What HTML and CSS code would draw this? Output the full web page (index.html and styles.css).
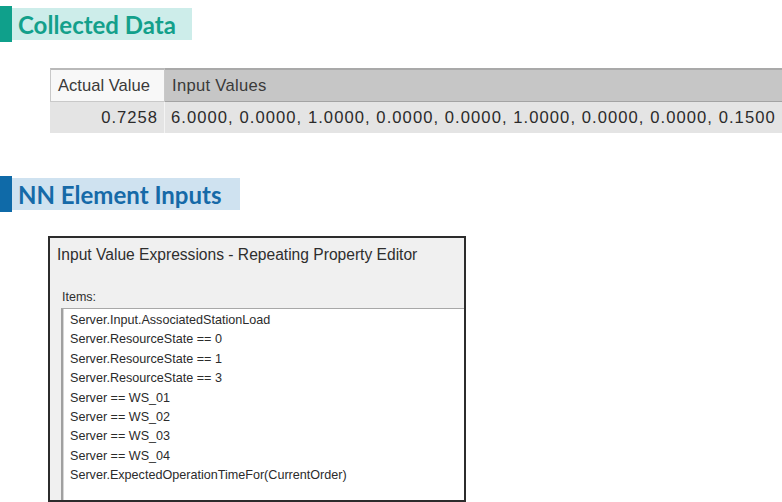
FILE: index.html
```html
<!DOCTYPE html>
<html>
<head>
<meta charset="utf-8">
<link rel="stylesheet" href="styles.css">
</head>
<body>
<div class="heading heading-teal">
  <div class="heading-bar"></div>
  <div class="heading-label">Collected Data</div>
</div>

<div class="data-table">
  <div class="row header-row">
    <div class="cell col-actual head-actual">Actual Value</div>
    <div class="cell col-inputs head-inputs">Input Values</div>
  </div>
  <div class="row data-row">
    <div class="cell col-actual num">0.7258</div>
    <div class="cell col-inputs nums">6.0000, 0.0000, 1.0000, 0.0000, 0.0000, 1.0000, 0.0000, 0.0000, 0.1500</div>
  </div>
</div>

<div class="heading heading-blue">
  <div class="heading-bar"></div>
  <div class="heading-label">NN Element Inputs</div>
</div>

<div class="dialog">
  <div class="dialog-title">Input Value Expressions - Repeating Property Editor</div>
  <div class="items-label">Items:</div>
  <div class="list">
    <div class="item">Server.Input.AssociatedStationLoad</div>
    <div class="item">Server.ResourceState == 0</div>
    <div class="item">Server.ResourceState == 1</div>
    <div class="item">Server.ResourceState == 3</div>
    <div class="item">Server == WS_01</div>
    <div class="item">Server == WS_02</div>
    <div class="item">Server == WS_03</div>
    <div class="item">Server == WS_04</div>
    <div class="item">Server.ExpectedOperationTimeFor(CurrentOrder)</div>
  </div>
</div>
</body>
</html>
```

FILE: styles.css
```css
html, body {
  margin: 0;
  padding: 0;
  background: #ffffff;
}
body {
  width: 782px;
  height: 502px;
  overflow: hidden;
  font-family: "Liberation Sans", Arial, sans-serif;
  color: #2b2b2b;
}

/* Section headings */
.heading {
  display: flex;
  align-items: center;
  height: 36px;
}
.heading-teal { margin-top: 6px; }
.heading-blue { margin-top: 43px; }
.heading-bar {
  width: 12px;
  align-self: stretch;
}
.heading-label {
  height: 32px;
  display: flex;
  align-items: center;
  padding-left: 6px;
  font-family: Lato, "Open Sans", sans-serif;
  font-weight: 700;
  font-size: 24px;
  box-sizing: border-box;
  white-space: nowrap;
}
.heading-teal .heading-bar { background: #0fa08b; }
.heading-teal .heading-label {
  background: #cdedea;
  color: #13a08b;
  width: 180px;
}
.heading-blue .heading-bar { background: #0f6aa8; }
.heading-blue .heading-label {
  background: #cfe2f0;
  color: #166aa8;
  width: 228px;
}

/* Table */
.data-table {
  margin-top: 26px;
  margin-left: 50px;
  width: 740px;
  font-size: 16.6px;
}
.row {
  display: flex;
}
.cell {
  box-sizing: border-box;
  display: flex;
  align-items: center;
  white-space: nowrap;
}
.col-actual { width: 115px; }
.col-inputs { flex: 1; }
.header-row { height: 34px; }
.head-actual {
  background: #f8f8f8;
  border: 1px solid #c9c9c9;
  border-top: 2px solid #b9b9b9;
  padding-left: 7px;
  color: #3a3a3a;
}
.head-inputs {
  background: #c6c6c6;
  border-top: 2px solid #a9a9a9;
  border-bottom: 1px solid #a3a3a3;
  padding-left: 7px;
  color: #3a3a3a;
  letter-spacing: 0.3px;
}
.data-row {
  height: 31px;
  background: #e4e4e4;
}
.num {
  justify-content: flex-end;
  padding-right: 6px;
  border-right: 1px solid #f4f4f4;
  letter-spacing: 1px;
}
.nums {
  padding-left: 6px;
  letter-spacing: 1.06px;
}

/* Dialog */
.dialog {
  margin-top: 24px;
  margin-left: 48px;
  width: 418px;
  height: 266px;
  box-sizing: border-box;
  border: 2px solid #2c2c2c;
  background: #f0f0f0;
  display: flex;
  flex-direction: column;
  overflow: hidden;
}
.dialog-title {
  font-size: 15.6px;
  padding: 7px 0 0 7px;
  height: 30px;
  line-height: 20px;
  box-sizing: border-box;
  color: #2e2e2e;
  white-space: nowrap;
}
.items-label {
  font-size: 12.5px;
  margin-top: 21px;
  padding-left: 12px;
  line-height: 16px;
  color: #2e2e2e;
}
.list {
  margin-top: 3px;
  margin-left: 11px;
  flex: 1;
  background: #ffffff;
  border-top: 1px solid #a8a8a8;
  border-left: 2px solid #a0a0a0;
  box-shadow: inset 1px 0 0 #d6d6d6;
  padding: 2px 0 0 7px;
}
.item {
  font-size: 12.6px;
  line-height: 19.4px;
  color: #2b2b2b;
  white-space: nowrap;
}
```
